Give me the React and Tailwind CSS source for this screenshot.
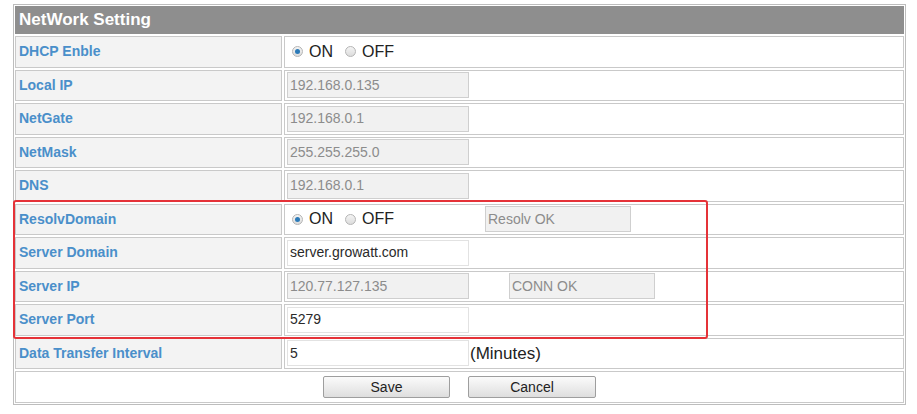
const FONT = { fontFamily: '"Liberation Sans", Arial, sans-serif' };

function Radio({ checked, className = "" }) {
  return (
    <span
      className={`flex h-[11px] w-[11px] shrink-0 items-center justify-center rounded-full border border-[#b5b5b5] bg-gradient-to-b from-[#f4f4f4] to-[#dcdcdc] ${className}`}
    >
      {checked && <span className="h-[5px] w-[5px] rounded-full bg-[#2b7ab8]" />}
    </span>
  );
}

function OnOff() {
  return (
    <div className="flex items-center text-[16px] leading-none text-[#222]">
      <Radio checked className="ml-[5px]" />
      <span className="ml-[6px]">ON</span>
      <Radio className="ml-[12px]" />
      <span className="ml-[6px]">OFF</span>
    </div>
  );
}

function Field({ value, disabled, className = "w-[182px]" }) {
  return (
    <div
      className={`flex h-[26px] items-center border px-[2px] text-[14px] ${className} ${
        disabled
          ? "border-[#cfcfcf] bg-[#f1f1f1] text-[#8c8c8c]"
          : "border-[#e2e2e2] bg-white text-[#2a2a2a]"
      }`}
    >
      {value}
    </div>
  );
}

function Row({ label, children }) {
  return (
    <div className="grid h-[31.5px] grid-cols-[267px_1fr] gap-[2px]">
      <div className="flex items-center border border-[#c9c9c9] bg-[#f3f3f3] pl-[3px] text-[14px] font-bold text-[#4a8fca]">
        {label}
      </div>
      <div className="flex items-center border border-[#c9c9c9] bg-white pl-[2px]">{children}</div>
    </div>
  );
}

function Button({ children, className }) {
  return (
    <button
      className={`h-[22px] rounded-[2px] border border-[#9e9e9e] bg-gradient-to-b from-[#fbfbfb] to-[#dedede] text-[14px] text-[#222] ${className}`}
    >
      {children}
    </button>
  );
}

export default function App() {
  return (
    <div className="h-[414px] w-[917px] bg-white pl-[13px] pt-[4px]" style={FONT}>
      <div className="relative w-[893px] border border-[#bdbdbd] p-px">
        <div className="flex flex-col gap-[2px]">
          <div className="flex h-[28px] items-center bg-[#8e8e8e] pl-[4px] text-[17px] font-bold text-white">
            NetWork Setting
          </div>

          <Row label="DHCP Enble"><OnOff /></Row>
          <Row label="Local IP"><Field value="192.168.0.135" disabled /></Row>
          <Row label="NetGate"><Field value="192.168.0.1" disabled /></Row>
          <Row label="NetMask"><Field value="255.255.255.0" disabled /></Row>
          <Row label="DNS"><Field value="192.168.0.1" disabled /></Row>
          <Row label="ResolvDomain">
            <OnOff />
            <div className="ml-[91px]">
              <Field value="Resolv OK" disabled className="w-[146px]" />
            </div>
          </Row>
          <Row label="Server Domain"><Field value="server.growatt.com" /></Row>
          <Row label="Server IP">
            <Field value="120.77.127.135" disabled />
            <div className="ml-[40px]">
              <Field value="CONN OK" disabled className="w-[146px]" />
            </div>
          </Row>
          <Row label="Server Port"><Field value="5279" /></Row>
          <Row label="Data Transfer Interval">
            <Field value="5" />
            <span className="ml-[1px] text-[17px] text-[#222]">(Minutes)</span>
          </Row>

          <div className="flex h-[32px] items-center justify-center gap-[18px] border border-[#c9c9c9] bg-white">
            <Button className="w-[127px]">Save</Button>
            <Button className="w-[128px]">Cancel</Button>
          </div>
        </div>

        {/* red highlight annotation */}
        <div className="pointer-events-none absolute left-[-1px] top-[195px] h-[139px] w-[695px] rounded-[3px] border-2 border-[#e53238]" />
      </div>
    </div>
  );
}
